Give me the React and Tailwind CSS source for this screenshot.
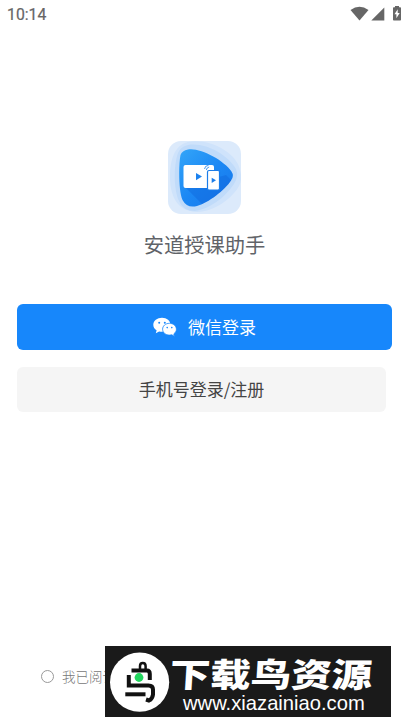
function StatusBar() {
  return (
    <div className="flex h-7 items-center justify-between pl-[7px] pr-[6px] text-[#666]">
      <span className="pt-0.5 font-[Roboto,sans-serif] text-[15.8px] font-normal leading-[26px] [-webkit-text-stroke:0.2px_#666]">10:14</span>
      <svg width="54" height="28" viewBox="349 0 54 28" fill="currentColor">
        <path d="M350.5 10Q359.5 3.500 368.5 10L359.5 20.500Z" />
        <path d="M384.3 7.500V20.500H371.3Z" />
        <path fillRule="evenodd" d="M395 6h4v1.300h1.200q.8 0 .8.8v11.600q0 .8-.8.8h-6.400q-.8 0-.8-.8V8.100q0-.8.8-.8H395ZM397.7 9.300l-3.200 5h1.900v4l3.300-5.200h-2Z" />
      </svg>
    </div>
  );
}

function AppLogo() {
  return (
    <svg width="74" height="74" viewBox="0 0 74 74">
      <defs>
        <linearGradient id="tri" x1="0" y1="0" x2="1" y2="1">
          <stop offset="0" stopColor="#3bb0fa" />
          <stop offset=".5" stopColor="#1c88f4" />
          <stop offset="1" stopColor="#1670e8" />
        </linearGradient>
        <clipPath id="tile"><rect x="0" y="0" width="73" height="73" rx="13" /></clipPath>
        <clipPath id="shape">
          <path d="M20 8.500C31 6 56 19 63.500 30.500Q66.500 35 63 39.500C57 49 40 62 29 65Q19 67.500 14.500 59C10.500 50 10.500 24 12.500 14Q14 9.500 20 8.500Z" />
        </clipPath>
      </defs>
      <g clipPath="url(#tile)">
        <rect width="74" height="74" fill="#dceafb" />
        <path d="M20 1C42-3 69 12 72 29Q76 42 66 52C55 65 36 74 22 70C6 66 2 50 2 36C2 20 6 4 20 1Z" fill="#cfe3fb" />
        <path d="M20 4C38 1 60 14 68 28Q71 35 66 43C57 57 41 68 27 70Q15 70 11 60C5 47 6 22 10 12Q12 6 20 4Z" fill="#c0dbfa" />
      </g>
      <g clipPath="url(#shape)">
        <rect width="74" height="74" fill="url(#tri)" />
        <path d="M17 46L45 74L74 50L58 34Z" fill="#0d61d7" opacity=".38" />
      </g>
      <rect x="15.500" y="24" width="30.500" height="23" rx="2" fill="#fff" />
      <path d="M28 32L34 35.500L28 39.300Z" fill="#1c82ef" />
      <path d="M36.500 28Q37 24.500 40.500 24.300M38.300 29Q38.700 26.500 41.200 26" fill="none" stroke="#1c82ef" strokeWidth=".8" />
      <rect x="39.500" y="29.500" width="12" height="19.500" rx="1.500" fill="#fff" stroke="#1c7de9" strokeWidth="1.200" />
      <path d="M43.700 36.700L48 39.300L43.700 42Z" fill="#1c7de9" />
    </svg>
  );
}

function WechatIcon() {
  return (
    <svg width="24" height="20" viewBox="0 0 24 20">
      <path d="M9 .7C4.200.7.300 3.800.300 7.800c0 2.300 1.200 4.200 3.300 5.500L2.800 16.200l3.300-1.800c1 .3 1.900.4 2.900.4 4.700 0 8.500-3 8.500-7S13.800.7 9 .7Z" fill="#fff" />
      <path d="M16.500 6.300c-3.900 0-6.900 2.600-6.900 5.900s3 5.900 6.900 5.900c.8 0 1.600-.1 2.300-.3l2.800 1.600-.8-2.500c1.500-1.100 2.600-2.700 2.600-4.700 0-3.300-3.200-5.900-6.900-5.900Z" fill="#fff" stroke="#1787fb" strokeWidth=".8" />
      <g fill="#1787fb">
        <circle cx="6.200" cy="5.800" r="1" /><circle cx="11.800" cy="5.800" r="1" />
        <circle cx="14.200" cy="10.600" r=".8" /><circle cx="18.800" cy="10.600" r=".8" />
      </g>
    </svg>
  );
}

function BirdBadge() {
  return (
    <svg className="shrink-0" width="60" height="60" viewBox="110 652 60 60">
      <circle cx="139.600" cy="682.200" r="29.600" fill="#fff" />
      <g fill="none" stroke="#111" strokeWidth="4">
        <path d="M140 669V666Q140 663 142.800 663Q145.600 663 145.600 666V670" strokeWidth="2.500" />
        <path d="M131.500 670.500H147Q149.800 670.500 149.800 674V680" />
        <path d="M128.800 675V685.500H148.500Q153 685.500 153 689.500V694.500Q152.500 699 149 700.500L146 699.500" />
        <path d="M125.300 694.300H145.500" />
      </g>
      <circle cx="139" cy="677.500" r="4.400" fill="#22d65e" />
    </svg>
  );
}

export default function App() {
  return (
    <main className="relative h-[727px] w-[409px] overflow-hidden bg-white font-['Noto_Sans_CJK_SC',sans-serif]">
      <StatusBar />
      <div className="flex flex-col items-center pt-[113px]">
        <AppLogo />
        <h1 className="mt-[14px] text-[20.3px] font-normal leading-[30px] text-[#606368]">安道授课助手</h1>
      </div>
      <div className="mt-[45px] flex flex-col gap-[17px] pl-[17px]">
        <button className="flex h-[46px] w-[375px] items-center justify-center gap-[11px] rounded-md bg-[#1787fb] text-[17px] text-white">
          <WechatIcon />
          <span>微信登录</span>
        </button>
        <button className="h-[45px] w-[369px] rounded-md bg-[#f5f5f5] pb-px text-[17px] text-[#444]">手机号登录/注册</button>
      </div>
      <div className="mt-[254px] flex h-5 items-center gap-2 pl-[41px] text-[13.5px] font-light text-[#777]">
        <span className="size-[13px] rounded-full border border-[#999]" />
        <span>我已阅读</span>
      </div>
      <div className="absolute left-[105px] top-[646px] flex h-[71px] w-[286px] items-center bg-[#1a1a1a] pl-[5px] text-white">
        <BirdBadge />
        <div className="flex h-full flex-col">
          <div className="mt-[7px] h-[40px] w-[170px] origin-left -skew-x-3 scale-x-[1.22] whitespace-nowrap text-[33.2px] font-black leading-[40px]">下载鸟资源</div>
          <div className="-mt-px ml-[13px] font-['Liberation_Sans',sans-serif] text-[20.2px] leading-[23px]">www.xiazainiao.com</div>
        </div>
      </div>
    </main>
  );
}
